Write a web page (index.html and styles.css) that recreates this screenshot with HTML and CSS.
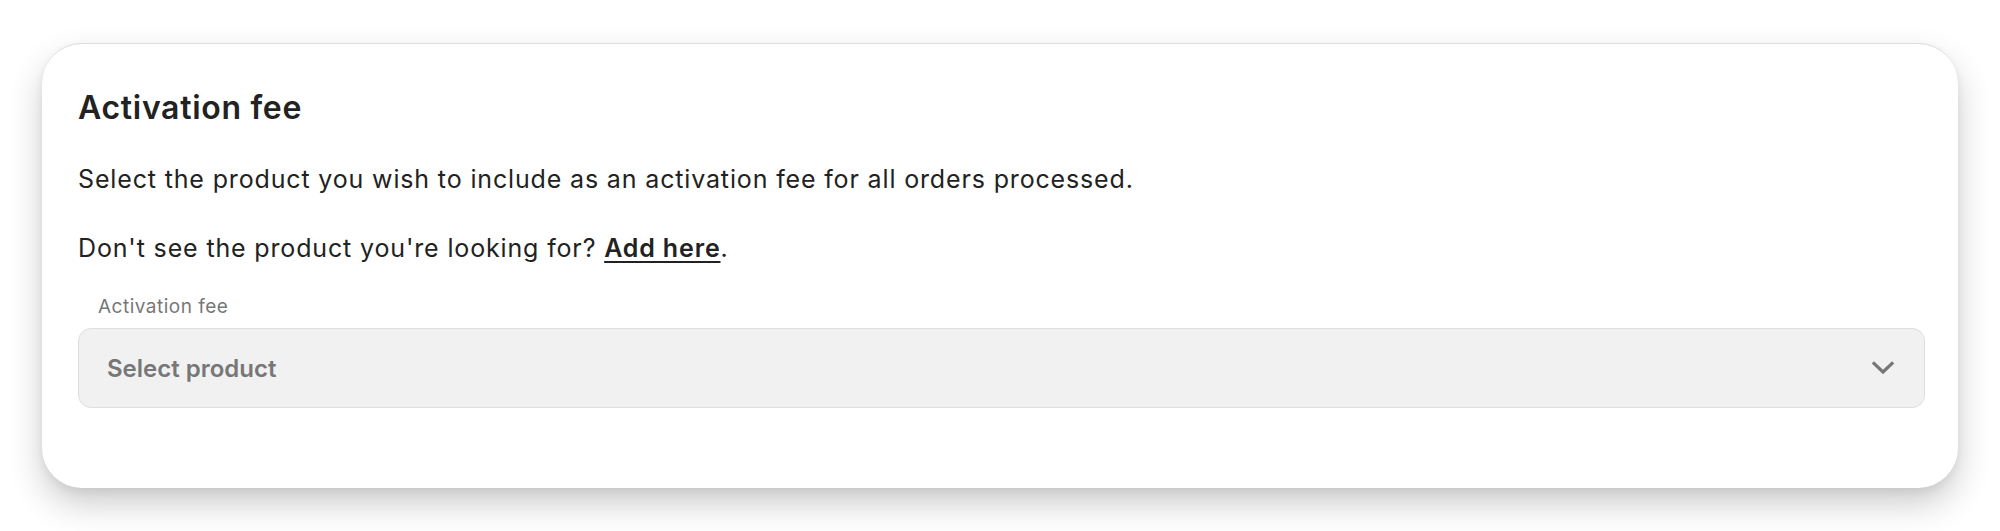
FILE: index.html
```html
<!DOCTYPE html>
<html lang="en">
<head>
<meta charset="utf-8">
<title>Activation fee</title>
<link rel="stylesheet" href="styles.css">
</head>
<body>
<div class="page">
  <section class="card">
    <h2 class="card-title">Activation fee</h2>
    <p class="card-text">Select the product you wish to include as an activation fee for all orders processed.</p>
    <p class="card-text">Don't see the product you're looking for? <a class="link" href="#">Add here</a>.</p>
    <div class="field">
      <label class="field-label">Activation fee</label>
      <div class="select">
        <span class="select-placeholder">Select product</span>
        <svg class="chevron" width="22" height="14" viewBox="0 0 22 14" aria-hidden="true">
          <path d="M2 2.5 L11 11 L20 2.5" fill="none" stroke="#777" stroke-width="3.2" stroke-linecap="square" stroke-linejoin="miter"/>
        </svg>
      </div>
    </div>
  </section>
</div>
</body>
</html>
```

FILE: styles.css
```css
html, body {
  margin: 0;
  padding: 0;
  background: #ffffff;
}

body {
  font-family: Inter, "Liberation Sans", sans-serif;
  color: #222222;
}

.page {
  padding: 43px 42px 0 42px;
  min-height: 531px;
  box-sizing: border-box;
}

.card {
  background: #ffffff;
  border-top: 1px solid #dcdcdc;
  border-radius: 40px;
  box-shadow: 0 16px 34px rgba(0, 0, 0, 0.2), 0 4px 10px rgba(0, 0, 0, 0.06);
  padding: 44px 33px 80px 36px;
  box-sizing: border-box;
  height: 445px;
}

.card-title {
  margin: 0 0 35px 0;
  font-size: 32px;
  line-height: 40px;
  font-weight: 600;
  letter-spacing: 0.7px;
  color: #222222;
}

.card-text {
  margin: 0 0 37px 0;
  font-size: 25px;
  line-height: 32px;
  font-weight: 400;
  letter-spacing: 0.85px;
  color: #222222;
}

.card-text:last-of-type {
  margin-bottom: 31px;
}

.link {
  color: #222222;
  font-weight: 600;
  text-decoration: underline;
  text-decoration-thickness: 2px;
  text-underline-offset: 4px;
}

.field {
  display: flex;
  flex-direction: column;
  gap: 9px;
}

.field-label {
  font-size: 19px;
  line-height: 24px;
  letter-spacing: 0.5px;
  color: #777777;
  padding-left: 20px;
}

.select {
  height: 80px;
  box-sizing: border-box;
  background: #f1f1f1;
  border: 1px solid #dedede;
  border-radius: 13px;
  display: flex;
  align-items: center;
  justify-content: space-between;
  padding: 0 30px 0 28px;
}

.select-placeholder {
  font-size: 24px;
  font-weight: 600;
  color: #777777;
}

.chevron {
  display: block;
}
```
